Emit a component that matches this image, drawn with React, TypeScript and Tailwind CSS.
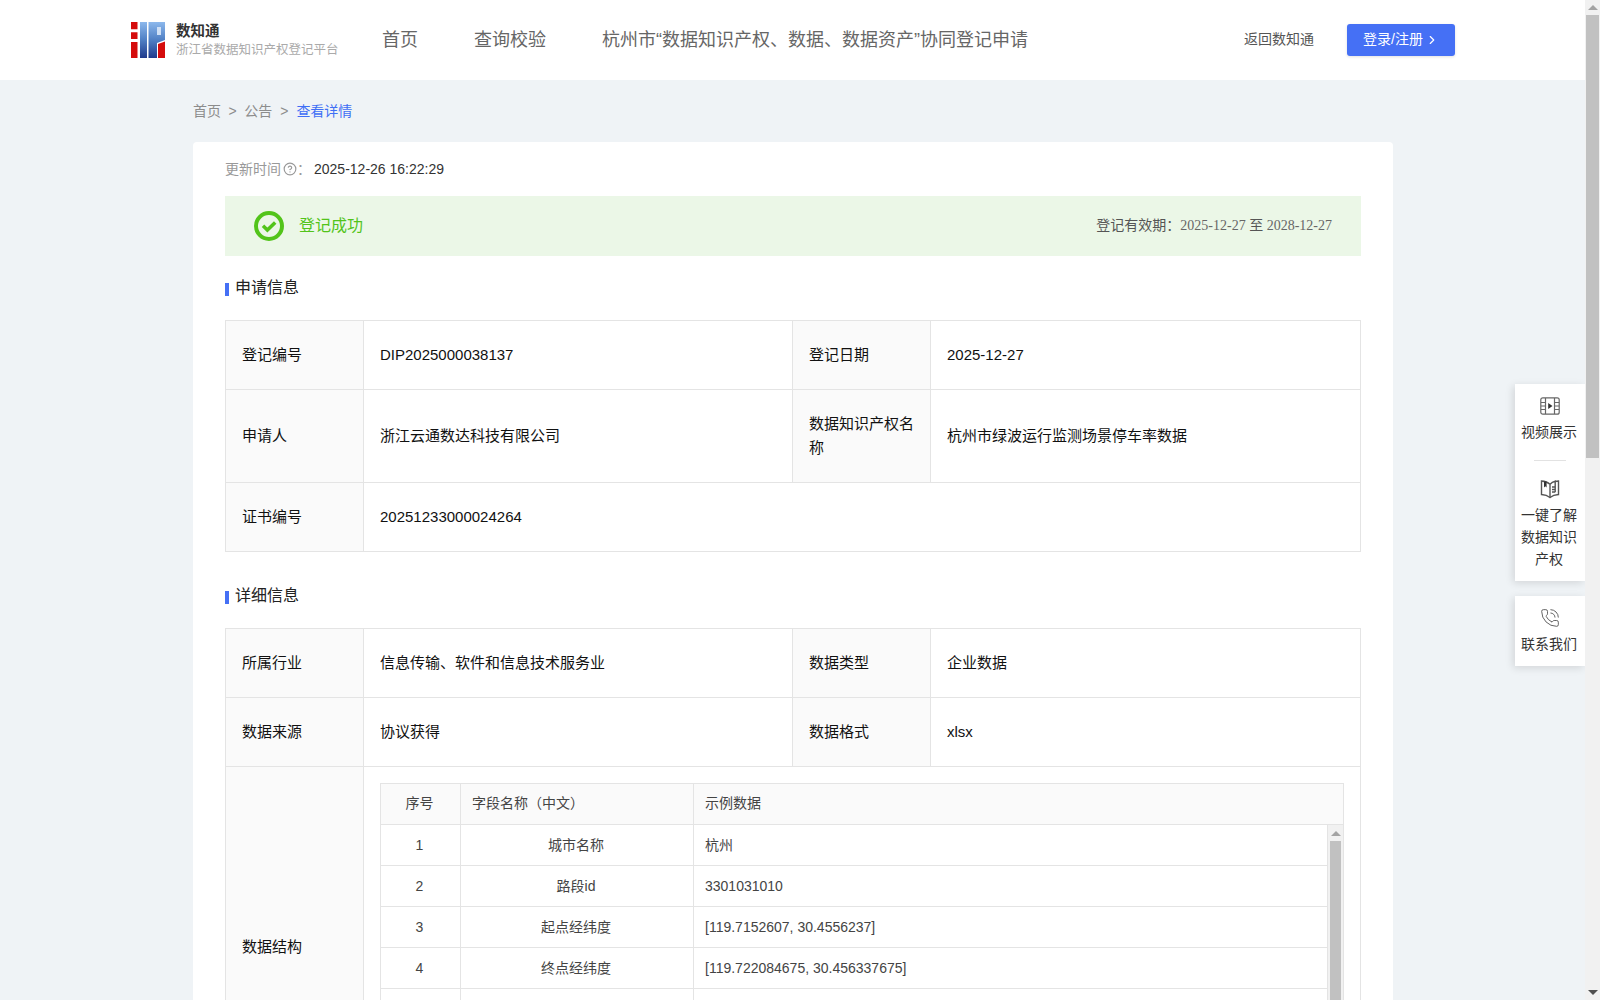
import React from 'react';
import { ChevronRight, CircleHelp, PhoneCall } from 'lucide-react';

const labelCell = "border border-[#e4e4e4] bg-[#fafafa] px-4 text-[15px] text-[#111]";
const valueCell = "border border-[#e4e4e4] px-4 text-[15px] text-[#111]";
const subCell = "border-b border-l border-[#e4e4e4] pl-[11px] pr-[13px] text-[14px] text-[#444]";

const Logo = () => (
    <svg width="35" height="36" viewBox="0 0 35 36" className="shrink-0">
        <defs>
            <linearGradient id="logoBlue" x1="0" y1="0" x2="0" y2="1">
                <stop offset="0" stopColor="#8cb8ec" />
                <stop offset="0.5" stopColor="#4f7fc4" />
                <stop offset="1" stopColor="#1f3a8c" />
            </linearGradient>
        </defs>
        <path d="M0 0h6.500v7.300H0zM0 10.300h6.500V17H0zM0 20h6.500v16H0z" fill="#d50c0c" />
        <rect x="9" y="0" width="7" height="36" fill="url(#logoBlue)" />
        <path d="M17.500 0H34v18l-8 3v15h-8.500z" fill="url(#logoBlue)" />
        <rect x="26" y="5" width="4" height="8" fill="#cfe0f6" />
        <path d="M34 19.500V36h-7V22z" fill="#d50c0c" />
    </svg>
);

const VideoIcon = () => (
    <svg width="20" height="20" viewBox="0 0 20 20" fill="none" stroke="#666" strokeWidth="1.2">
        <rect x="0.8" y="1.8" width="18.4" height="16.4" rx="2" />
        <path d="M5.500 2v16M14.500 2v16M1 6.500h4.500M1 10h4.500M1 13.500h4.500M14.500 6.500H19M14.500 10H19M14.500 13.500H19" />
        <path d="M8.200 7l4.300 3-4.300 3z" fill="#333" stroke="none" />
    </svg>
);

const BookIcon = () => (
    <svg width="20" height="20" viewBox="0 0 20 20" fill="none" stroke="#555" strokeWidth="1.4">
        <path d="M10 5.200C8 3.400 5.200 2.200 1.500 2v13.500c3.400.2 6.300 1.200 8.500 3 2.200-1.800 5.100-2.800 8.500-3V2c-1.200 0-2.300.2-3.300.5" />
        <path d="M10 5.200v13.300M10 5.200c1.400-1.500 3.200-2.500 5.200-3v11" />
        <path d="M4 2.500h2.600v6L5.300 7.300 4 8.500z" fill="#333" stroke="none" />
        <path d="M12 8h3M12 10.500h3M12 13h3" />
    </svg>
);

const SuccessIcon = () => (
    <svg width="30" height="30" viewBox="0 0 30 30" fill="none" className="shrink-0">
        <circle cx="15" cy="15" r="13" stroke="#52c41a" strokeWidth="4" />
        <path d="M9 14.800l4.400 4.300 7.800-7.600" stroke="#52c41a" strokeWidth="3.500" />
    </svg>
);

const SectionTitle = ({ text, className }: { text: string; className: string }) => (
    <div className={`flex items-center h-5 ${className}`}>
        <span className="w-1 h-[13px] mt-[3px] bg-[#4570f5]" />
        <span className="ml-[6px] text-[16px] text-[#222]">{text}</span>
    </div>
);

const ScrollArrow = ({ down, color }: { down?: boolean; color: string }) => (
    <svg width="10" height="5" viewBox="0 0 10 5">
        <path d={down ? "M0 0h10L5 5z" : "M5 0l5 5H0z"} fill={color} />
    </svg>
);

const fields = [
    { no: "1", name: "城市名称", sample: "杭州" },
    { no: "2", name: "路段id", sample: "3301031010" },
    { no: "3", name: "起点经纬度", sample: "[119.7152607, 30.4556237]" },
    { no: "4", name: "终点经纬度", sample: "[119.722084675, 30.456337675]" },
    { no: "", name: "", sample: "" },
    { no: "", name: "", sample: "" },
    { no: "", name: "", sample: "" },
];

const App: React.FC = () => {
    return (
        <div className="flex h-screen overflow-hidden font-['Liberation_Sans','Noto_Sans_CJK_SC',sans-serif]">
            <div className="relative w-[1585px] shrink-0 bg-[#eff3f6] overflow-hidden">
                <header className="h-20 bg-white flex items-center pl-[131px]">
                    <Logo />
                    <div className="ml-[10px] w-[188px]">
                        <p className="text-[14.500px] leading-[20px] font-bold text-[#333]">数知通</p>
                        <p className="text-[12.500px] leading-[18px] text-[#aaa] whitespace-nowrap">浙江省数据知识产权登记平台</p>
                    </div>
                    <nav className="ml-[18px] w-[864px] flex items-center text-[18px] text-[#666] whitespace-nowrap">
                        <span>首页</span>
                        <span className="ml-[56px]">查询校验</span>
                        <span className="ml-[56px]">杭州市“数据知识产权、数据、数据资产”协同登记申请</span>
                    </nav>
                    <span className="text-[14px] text-[#555] whitespace-nowrap ml-[-2px] pb-[1px]">返回数知通</span>
                    <button className="ml-[33px] w-[108px] h-8 pb-[1px] rounded-[3px] bg-[#4570f5] text-white text-[14px] flex items-center justify-center shadow-[0_1px_3px_rgba(0,0,0,0.12)]">
                        登录/注册
                        <ChevronRight size={14} className="ml-[2px]" />
                    </button>
                </header>

                <div className="w-[1200px] ml-[193px]">
                    <div className="h-[62px] flex items-center text-[14px] text-[#8c8c8c]">
                        <span>首页</span>
                        <span className="mx-[7.500px]">&gt;</span>
                        <span>公告</span>
                        <span className="mx-2">&gt;</span>
                        <span className="text-[#3f6ff5]">查看详情</span>
                    </div>

                    <div className="bg-white rounded-[4px] px-8 pt-[17px] h-[1000px]">
                        <div className="flex items-center h-5 text-[14px]">
                            <span className="text-[#999]">更新时间</span>
                            <CircleHelp size={14} className="text-[#999] ml-[2px]" />
                            <span className="text-[#999] w-[17px]">：</span>
                            <span className="text-[#333]">2025-12-26 16:22:29</span>
                        </div>

                        <div className="mt-[17px] h-[60px] bg-[#ebf7e7] flex items-center justify-between px-[29px]">
                            <div className="flex items-center">
                                <SuccessIcon />
                                <span className="ml-[15px] pb-[1px] text-[16px] text-[#52c41a]">登记成功</span>
                            </div>
                            <div className="text-[14px] pb-[1px] text-[#555]">
                                登记有效期：<span className="font-['Liberation_Serif','Noto_Sans_CJK_SC',serif] text-[#666]">2025-12-27 <span className="text-[#555]">至</span> 2028-12-27</span>
                            </div>
                        </div>

                        <SectionTitle text="申请信息" className="mt-[22px]" />

                        <table className="mt-[22px] w-[1136px] table-fixed border-collapse">
                            <colgroup>
                                <col className="w-[138px]" />
                                <col className="w-[429px]" />
                                <col className="w-[138px]" />
                                <col />
                            </colgroup>
                            <tbody>
                                <tr className="h-[69px]">
                                    <td className={labelCell}>登记编号</td>
                                    <td className={valueCell}>DIP2025000038137</td>
                                    <td className={labelCell}>登记日期</td>
                                    <td className={valueCell}>2025-12-27</td>
                                </tr>
                                <tr className="h-[93px]">
                                    <td className={labelCell}>申请人</td>
                                    <td className={valueCell}>浙江云通数达科技有限公司</td>
                                    <td className={`${labelCell} leading-[24px]`}>数据知识产权名称</td>
                                    <td className={valueCell}>杭州市绿波运行监测场景停车率数据</td>
                                </tr>
                                <tr className="h-[69px]">
                                    <td className={labelCell}>证书编号</td>
                                    <td className={valueCell} colSpan={3}>20251233000024264</td>
                                </tr>
                            </tbody>
                        </table>

                        <SectionTitle text="详细信息" className="mt-[34px]" />

                        <table className="mt-[22px] w-[1136px] table-fixed border-collapse">
                            <colgroup>
                                <col className="w-[138px]" />
                                <col className="w-[429px]" />
                                <col className="w-[138px]" />
                                <col />
                            </colgroup>
                            <tbody>
                                <tr className="h-[69px]">
                                    <td className={labelCell}>所属行业</td>
                                    <td className={valueCell}>信息传输、软件和信息技术服务业</td>
                                    <td className={labelCell}>数据类型</td>
                                    <td className={valueCell}>企业数据</td>
                                </tr>
                                <tr className="h-[69px]">
                                    <td className={labelCell}>数据来源</td>
                                    <td className={valueCell}>协议获得</td>
                                    <td className={labelCell}>数据格式</td>
                                    <td className={valueCell}>xlsx</td>
                                </tr>
                                <tr>
                                    <td className={labelCell}>数据结构</td>
                                    <td className="border border-[#e4e4e4] p-4" colSpan={3}>
                                        <table className="w-[964px] table-fixed border-separate border-spacing-0">
                                            <colgroup>
                                                <col className="w-[80px]" />
                                                <col className="w-[233px]" />
                                                <col />
                                            </colgroup>
                                            <thead>
                                                <tr className="h-[42px] bg-[#fafafa]">
                                                    <th className={`${subCell} border-t pb-[2px] font-normal text-center`}>序号</th>
                                                    <th className={`${subCell} border-t pb-[2px] font-normal text-left`}>字段名称（中文）</th>
                                                    <th className={`${subCell} border-t border-r pb-[2px] font-normal text-left`}>示例数据</th>
                                                </tr>
                                            </thead>
                                        </table>
                                        <div className="flex w-[964px] h-[287px] overflow-hidden">
                                            <table className="w-[948px] h-fit table-fixed border-separate border-spacing-0">
                                                <colgroup>
                                                    <col className="w-[80px]" />
                                                    <col className="w-[233px]" />
                                                    <col />
                                                </colgroup>
                                                <tbody>
                                                    {fields.map((field, i) => (
                                                        <tr key={i} className="h-[41px]">
                                                            <td className={`${subCell} text-center`}>{field.no}</td>
                                                            <td className={`${subCell} text-center`}>{field.name}</td>
                                                            <td className={`${subCell} border-r`}>{field.sample}</td>
                                                        </tr>
                                                    ))}
                                                </tbody>
                                            </table>
                                            <div className="w-4 shrink-0 bg-[#f1f1f1] border-r border-[#e4e4e4] flex flex-col items-center">
                                                <div className="h-4 flex items-center justify-center">
                                                    <ScrollArrow color="#a3a3a3" />
                                                </div>
                                                <div className="w-[11px] flex-1 bg-[#c1c1c1]" />
                                            </div>
                                        </div>
                                    </td>
                                </tr>
                            </tbody>
                        </table>
                    </div>
                </div>

                {/* floating side panel */}
                <div className="absolute left-[1515px] top-[384px] w-[70px] flex flex-col gap-[15px] text-[14px] leading-[22px] text-[#333] text-center">
                    <div className="bg-white pt-3 pb-[11px] flex flex-col items-center shadow-[-2px_2px_8px_rgba(0,0,0,0.12)]">
                        <VideoIcon />
                        <span className="mt-[5px] mr-[2px]">视频展示</span>
                        <span className="mt-[17px] w-8 h-px bg-[#e2e2e2]" />
                        <div className="mt-[18px]"><BookIcon /></div>
                        <span className="mt-[5px] mr-[2px] w-[56px]">一键了解数据知识产权</span>
                    </div>
                    <div className="bg-white pt-3 pb-[11px] flex flex-col items-center shadow-[-2px_2px_8px_rgba(0,0,0,0.12)]">
                        <PhoneCall size={20} strokeWidth={1.1} className="text-[#555]" />
                        <span className="mt-[5px] mr-[2px]">联系我们</span>
                    </div>
                </div>
            </div>

            {/* page scrollbar */}
            <div className="w-[15px] shrink-0 bg-[#f1f1f1] flex flex-col items-center">
                <div className="h-[15px] flex items-center justify-center">
                    <ScrollArrow color="#a3a3a3" />
                </div>
                <div className="w-[13px] h-[443px] bg-[#c1c1c1]" />
                <div className="flex-1" />
                <div className="h-[15px] flex items-center justify-center">
                    <ScrollArrow down color="#505050" />
                </div>
            </div>
        </div>
    );
};

export default App;
